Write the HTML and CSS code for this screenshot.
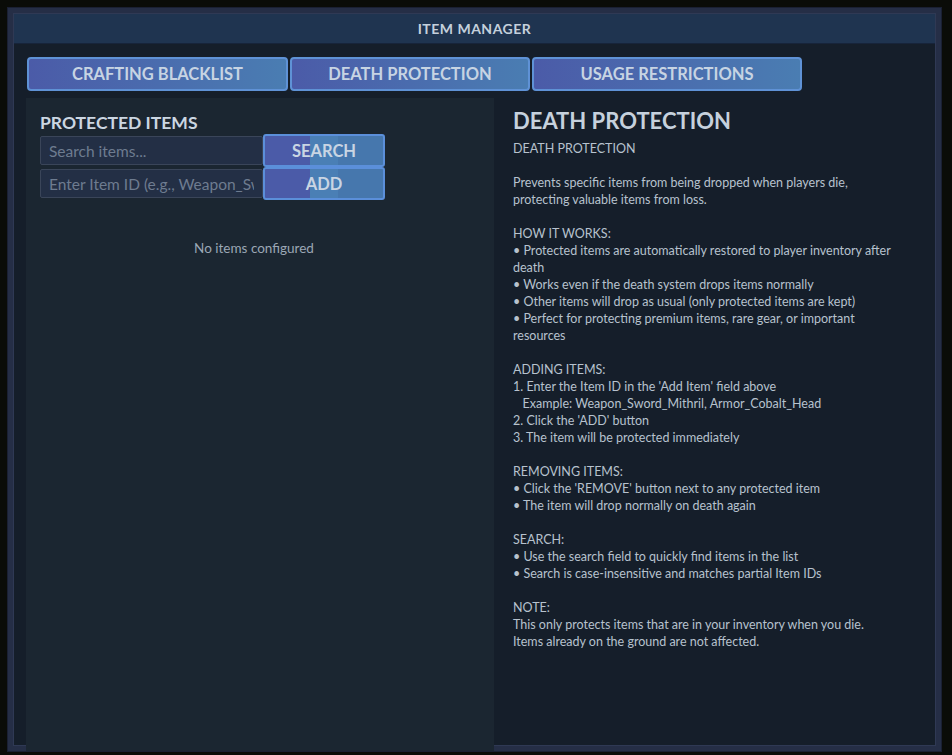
FILE: index.html
```html
<!DOCTYPE html>
<html lang="en">
<head>
    <meta charset="UTF-8">
    <meta name="viewport" content="width=device-width, initial-scale=1.0">
    <title>Item Manager</title>
    <link rel="stylesheet" href="styles.css">
</head>
<body>
    <div class="window">
        <div class="title-bar">ITEM MANAGER</div>

        <div class="window-body">
            <div class="tabs">
                <button class="tab tab-crafting">CRAFTING BLACKLIST</button>
                <button class="tab tab-death">DEATH PROTECTION</button>
                <button class="tab tab-usage">USAGE RESTRICTIONS</button>
            </div>

            <div class="content">
                <div class="item-panel">
                    <h2>PROTECTED ITEMS</h2>
                    <div class="field-row">
                        <input type="text" placeholder="Search items...">
                        <button class="action-btn">SEARCH</button>
                    </div>
                    <div class="field-row">
                        <input type="text" placeholder="Enter Item ID (e.g., Weapon_Sword_Mithril)">
                        <button class="action-btn">ADD</button>
                    </div>
                    <p class="empty">No items configured</p>
                </div>

                <div class="info-panel">
                    <h1>DEATH PROTECTION</h1>
<div class="info-text">DEATH PROTECTION

Prevents specific items from being dropped when players die, protecting valuable items from loss.

HOW IT WORKS:
• Protected items are automatically restored to player inventory after death
• Works even if the death system drops items normally
• Other items will drop as usual (only protected items are kept)
• Perfect for protecting premium items, rare gear, or important resources

ADDING ITEMS:
1. Enter the Item ID in the 'Add Item' field above
   Example: Weapon_Sword_Mithril, Armor_Cobalt_Head
2. Click the 'ADD' button
3. The item will be protected immediately

REMOVING ITEMS:
• Click the 'REMOVE' button next to any protected item
• The item will drop normally on death again

SEARCH:
• Use the search field to quickly find items in the list
• Search is case-insensitive and matches partial Item IDs

NOTE:
This only protects items that are in your inventory when you die.
Items already on the ground are not affected.</div>
                </div>
            </div>
        </div>
    </div>
</body>
</html>
```

FILE: styles.css
```css
* {
    margin: 0;
    padding: 0;
    box-sizing: border-box;
    font-family: Lato, "Noto Sans", sans-serif;
}

body {
    background: #0a0c08;
    height: 755px;
    overflow: hidden;
    padding: 8px 11px 4px 8px;
    color: #b9c4d0;
}

.window {
    height: 743px;
    background: #151e2a;
    border: 5px solid #252e46;
    box-shadow: inset 0 0 0 1px #2f3954, 0 0 0 1px #1a2033;
    display: flex;
    flex-direction: column;
}

.title-bar {
    height: 30px;
    margin: 1px 1px 0 1px;
    background: #1f3450;
    border-bottom: 1px solid #17243a;
    text-align: center;
    line-height: 29px;
    font-size: 14px;
    font-weight: bold;
    letter-spacing: 0.5px;
    color: #c4d0dc;
}

.window-body {
    flex: 1;
    display: flex;
    flex-direction: column;
    padding: 13px 0 0 13px;
}

.tabs {
    display: flex;
    gap: 2px;
    margin-left: 1px;
}

.tab {
    height: 34px;
    background: linear-gradient(90deg, #4b5ba8 0%, #4a6cae 50%, #4a7db2 100%);
    border: 2px solid #5f92d6;
    border-radius: 4px;
    color: #c7d4e3;
    font-size: 16.5px;
    font-weight: bold;
    cursor: pointer;
}

.tab-crafting { width: 261px; }
.tab-death { width: 240px; }
.tab-usage { width: 270px; }

.content {
    flex: 1;
    display: flex;
    margin-top: 7px;
}

.item-panel {
    width: 468px;
    margin-bottom: -5px;
    background: #1b2631;
    padding: 14px 14px 0 14px;
}

.item-panel h2 {
    font-size: 17.5px;
    font-weight: bold;
    color: #cbd6e2;
    line-height: 22px;
}

.field-row {
    display: flex;
    align-items: center;
    height: 33px;
}

.field-row input {
    width: 223px;
    height: 29px;
    background: #232f45;
    border: 1px solid #3a4559;
    border-radius: 2px;
    padding: 0 8px;
    font-size: 15.5px;
    color: #c7d4e3;
    outline: none;
}

.field-row input::placeholder {
    color: #6e7c90;
}

.action-btn {
    width: 122px;
    height: 33px;
    background: linear-gradient(90deg, #4b5ba8 0%, #4b5ba8 38%, #4a7fb5 38%, #4a7fb5 62%, #4677ad 62%, #4677ad 100%);
    border: 2px solid #5b8fda;
    border-radius: 3px;
    color: #c9d5e3;
    font-size: 16.5px;
    font-weight: bold;
    cursor: pointer;
}

.empty {
    text-align: center;
    margin-top: 40px;
    padding-right: 12px;
    font-size: 13.5px;
    color: #9ba7b5;
}

.info-panel {
    flex: 1;
    padding: 9px 34px 0 19px;
}

.info-panel h1 {
    font-size: 22px;
    font-weight: bold;
    color: #c6d1dd;
    line-height: 28px;
    margin-bottom: 5px;
}

.info-text {
    white-space: pre-wrap;
    font-size: 12.5px;
    line-height: 17px;
    color: #b7c2ce;
}
```
